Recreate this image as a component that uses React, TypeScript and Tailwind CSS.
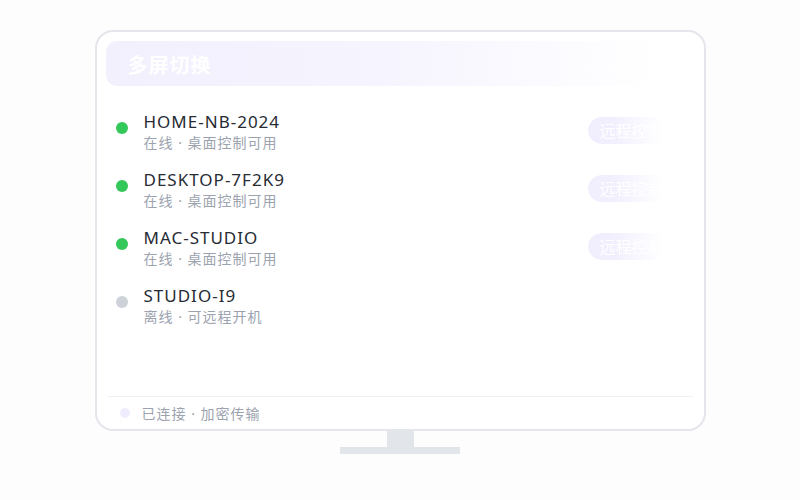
const DEVICES = [
  { name: "HOME-NB-2024", status: "在线 · 桌面控制可用", online: true },
  { name: "DESKTOP-7F2K9", status: "在线 · 桌面控制可用", online: true },
  { name: "MAC-STUDIO", status: "在线 · 桌面控制可用", online: true },
  { name: "STUDIO-I9", status: "离线 · 可远程开机", online: false },
];

function DeviceRow({ name, status, online }: { name: string; status: string; online: boolean }) {
  return (
    <div className="flex items-start h-[42px] pl-[10px]">
      <span className={`mt-[11px] size-3 rounded-full shrink-0 ${online ? "bg-[#34c759]" : "bg-[#cdd1d8]"}`} />
      <div className="ml-4 flex flex-col">
        <p className="text-[17px] leading-[22px] text-[#272b33] tracking-[1px]">{name}</p>
        <p className="text-[14px] leading-[20px] text-[#9ca3af] tracking-[1px]">{status}</p>
      </div>
      {online && (
        <div className="ml-auto mr-[19px] mt-[6px] h-[27px] w-[88px] rounded-full bg-[#f1eefe] flex items-center px-3 [mask-image:linear-gradient(to_right,black_25%,transparent_85%)]">
          <span className="text-[16px] text-white whitespace-nowrap">远程控制</span>
        </div>
      )}
    </div>
  );
}

export default function App() {
  return (
    <div
      className="w-[800px] h-[500px] bg-[#fdfdfe] flex flex-col items-center pt-[30px]"
      style={{ fontFamily: '"Noto Sans", "Noto Sans CJK SC", sans-serif' }}
    >
      <div className="w-[611px] h-[401px] rounded-[18px] border-2 border-[#e4e6ec] bg-white px-[9px] pt-[9px] flex flex-col">
        <div className="h-[45px] w-[555px] rounded-[11px] bg-gradient-to-r from-[#f3f0fe] via-[#f6f4fe] to-[#ffffff] flex items-center px-[22px] pt-[4px]">
          <h1 className="text-[20px] font-bold text-white tracking-[1px]">多屏切换</h1>
          <span className="ml-auto text-[13px] text-white">4 台设备</span>
        </div>

        <div className="flex-1 flex flex-col gap-4 pt-[25px]">
          {DEVICES.map((d) => (
            <DeviceRow key={d.name} {...d} />
          ))}
        </div>

        <div className="mx-[2px] h-[33px] border-t border-[#eef0f3] flex items-center pl-3">
          <span className="size-[10px] rounded-full bg-[#efecfd]" />
          <span className="ml-3 text-[14px] text-[#9ca3af] tracking-[1px]">已连接 · 加密传输</span>
        </div>
      </div>
      <div className="w-[27px] h-[16px] bg-[#e2e6ea]" />
      <div className="w-[120px] h-[7px] bg-[#e2e6ea]" />
    </div>
  );
}
